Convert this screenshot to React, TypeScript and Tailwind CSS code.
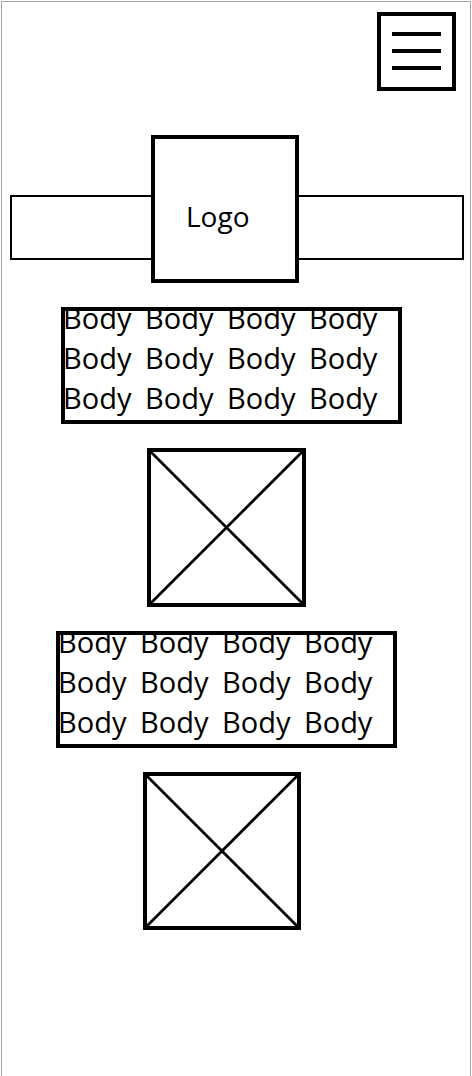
const bodyText = Array(12).fill("Body").join(" ");

function Placeholder({ className }: { className: string }) {
  return (
    <div className={`box-border border-4 border-black ${className}`}>
      <svg viewBox="0 0 100 100" preserveAspectRatio="none" className="block h-full w-full">
        <line x1="0" y1="0" x2="100" y2="100" stroke="black" strokeWidth="1.8" />
        <line x1="100" y1="0" x2="0" y2="100" stroke="black" strokeWidth="1.8" />
      </svg>
    </div>
  );
}

function BodyBox({ className }: { className: string }) {
  return (
    <div className={`box-border h-[117px] w-[341px] border-4 border-black ${className}`}>
      <p className="-ml-[2px] -mt-[13px] text-[29px] leading-[40px] text-black [word-spacing:6px]">
        {bodyText}
      </p>
    </div>
  );
}

export default function App() {
  return (
    <div className="min-h-[1076px] bg-white pl-px pt-px" style={{ fontFamily: '"Open Sans", "Noto Sans", sans-serif' }}>
      <div className="box-border min-h-[1075px] w-[470px] border-l border-r border-t border-[#a3a3a3]">
        <div className="flex justify-end pr-[14px] pt-[10px]">
          <button
            type="button"
            className="box-border flex h-[79px] w-[79px] flex-col gap-[13px] border-4 border-black px-[11px] pt-[16px]"
          >
            <span className="block h-[4px] w-full bg-black" />
            <span className="block h-[4px] w-full bg-black" />
            <span className="block h-[4px] w-full bg-black" />
          </button>
        </div>

        <header className="mt-[44px] flex items-start pl-[8px]">
          <div className="mt-[60px] box-border h-[65px] w-[141px] border-2 border-r-0 border-black" />
          <div className="box-border h-[148px] w-[148px] border-4 border-black pl-[31px] pt-[63px]">
            <span className="block text-[28px] leading-[28px] text-black">Logo</span>
          </div>
          <div className="mt-[60px] box-border h-[65px] w-[165px] border-2 border-l-0 border-black" />
        </header>

        <BodyBox className="ml-[59px] mt-[24px]" />
        <Placeholder className="ml-[145px] mt-[24px] h-[159px] w-[159px]" />
        <BodyBox className="ml-[54px] mt-[24px]" />
        <Placeholder className="ml-[141px] mt-[24px] h-[158px] w-[158px]" />
      </div>
    </div>
  );
}
